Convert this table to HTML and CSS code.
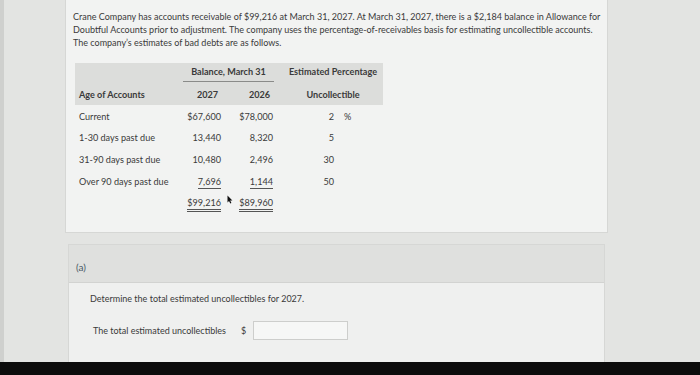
FILE: index.html
```html
<!DOCTYPE html>
<html>
<head>
<meta charset="utf-8">
<link rel="stylesheet" href="styles.css">
</head>
<body>
<div class="screen">
  <div class="main">
    <div class="card intro">
      <p class="lead">Crane Company has accounts receivable of $99,216 at March 31, 2027. At March 31, 2027, there is a $2,184 balance in Allowance for Doubtful Accounts prior to adjustment. The company uses the percentage-of-receivables basis for estimating uncollectible accounts. The company’s estimates of bad debts are as follows.</p>
      <table class="aging">
        <thead>
          <tr class="h1">
            <th class="c1"></th>
            <th class="bal" colspan="2"><span class="bal-t">Balance, March 31</span></th>
            <th class="c4">Estimated Percentage</th>
          </tr>
          <tr class="h2">
            <th class="c1">Age of Accounts</th>
            <th class="c2">2027</th>
            <th class="c3">2026</th>
            <th class="c4">Uncollectible</th>
          </tr>
        </thead>
        <tbody>
          <tr><td class="c1">Current</td><td class="c2 num">$67,600</td><td class="c3 num">$78,000</td><td class="c4"><span class="pct">2</span><span class="pc">%</span></td></tr>
          <tr><td class="c1">1-30 days past due</td><td class="c2 num">13,440</td><td class="c3 num">8,320</td><td class="c4"><span class="pct">5</span></td></tr>
          <tr><td class="c1">31-90 days past due</td><td class="c2 num">10,480</td><td class="c3 num">2,496</td><td class="c4"><span class="pct">30</span></td></tr>
          <tr><td class="c1">Over 90 days past due</td><td class="c2 num"><span class="ul">7,696</span></td><td class="c3 num"><span class="ul">1,144</span></td><td class="c4"><span class="pct">50</span></td></tr>
          <tr><td class="c1"></td><td class="c2 num"><span class="dul">$99,216</span><svg class="cursor" width="6" height="9" viewBox="0 0 6 9"><path d="M0.5 0.5 L0.5 7.5 L2 6 L3.3 8.6 L4.4 8.1 L3.2 5.6 L5.4 5.6 Z" fill="#111"/></svg></td><td class="c3 num"><span class="dul">$89,960</span></td><td class="c4"></td></tr>
        </tbody>
      </table>
    </div>
    <div class="card part">
      <div class="part-head">(a)</div>
      <div class="part-body">
        <p class="q">Determine the total estimated uncollectibles for 2027.</p>
        <div class="answer">
          <span class="alabel">The total estimated uncollectibles</span>
          <span class="dollar">$</span>
          <span class="input"></span>
        </div>
      </div>
    </div>
  </div>
  <div class="bar"></div>
</div>
</body>
</html>
```

FILE: styles.css
```css
* { box-sizing: border-box; }
html, body { margin: 0; padding: 0; }
body {
  width: 700px;
  height: 375px;
  overflow: hidden;
  background: #e3e4e2;
  font-family: Lato, "Open Sans", sans-serif;
  color: #3a3a3a;
}
.screen {
  height: 375px;
  display: flex;
  flex-direction: column;
  border-left: 4px solid #cfd0ce;
}
.main {
  flex: 1;
  overflow: hidden;
  padding-left: 61px;
}
.bar {
  height: 13px;
  background: #0c0c0c;
  margin-left: -4px;
}
.card {
  background: #f2f3f2;
  border: 1px solid #d6d7d5;
}
.intro {
  width: 543px;
  height: 233px;
  border-top: none;
  padding: 10px 0 0 7px;
}
.lead {
  margin: 0;
  font-size: 9px;
  line-height: 13px;
  width: 532px;
}
.aging {
  margin-top: 14px;
  margin-left: 2px;
  border-collapse: collapse;
  font-size: 9.1px;
}
.aging th, .aging td { padding: 0; }
.aging thead tr { background: #dcdddb; }
.aging th { font-weight: 700; }
.h1 th { height: 21px; padding-top: 3px; vertical-align: top; }
.h2 th { height: 21px; padding-bottom: 0; }
.c1 { width: 105px; text-align: left; padding-left: 4px !important; }
.c2 { width: 45px; padding-right: 4px !important; }
.c3 { width: 52px; padding-right: 4px !important; }
.c4 { width: 106px; padding-left: 37px !important; }
.h2 .c2 { text-align: right; padding-right: 7px !important; }
.h2 .c3 { text-align: right; padding-right: 7px !important; }
.h1 .c4, .h2 .c4 { text-align: center; padding-left: 6px !important; }
.bal { text-align: center; }
.bal-t {
  display: inline-block;
  padding: 0 8px 4px;
  border-bottom: 1px solid #8a8b89;
}
.aging tbody td { height: 21.6px; padding-top: 1px; }
.num { text-align: right; position: relative; }
.pct { display: inline-block; width: 20px; text-align: right; }
.pc { margin-left: 10px; }
.ul { border-bottom: 1px solid #555; padding-bottom: 1px; }
.dul { border-bottom: 3px double #555; padding-bottom: 1px; }
.cursor { position: absolute; right: -8px; top: 4px; }

.part {
  width: 537px;
  margin-top: 11px;
  margin-left: 3px;
  background: #eff0ef;
  height: 140px;
}
.part-head {
  height: 38px;
  background: #dfe0de;
  border-bottom: 1px solid #d2d3d1;
  font-size: 10px;
  padding: 16px 0 0 7px;
  color: #4a5a66;
}
.part-body { padding: 10px 0 0 21px; font-size: 9px; }
.q { margin: 0; }
.answer {
  display: flex;
  align-items: center;
  margin-top: 17px;
  padding-left: 3px;
  font-size: 9px;
}
.dollar { margin-left: 15px; }
.input {
  margin-left: 7px;
  width: 95px;
  height: 19px;
  background: #f6f7f6;
  border: 1px solid #cdcecc;
}
```
